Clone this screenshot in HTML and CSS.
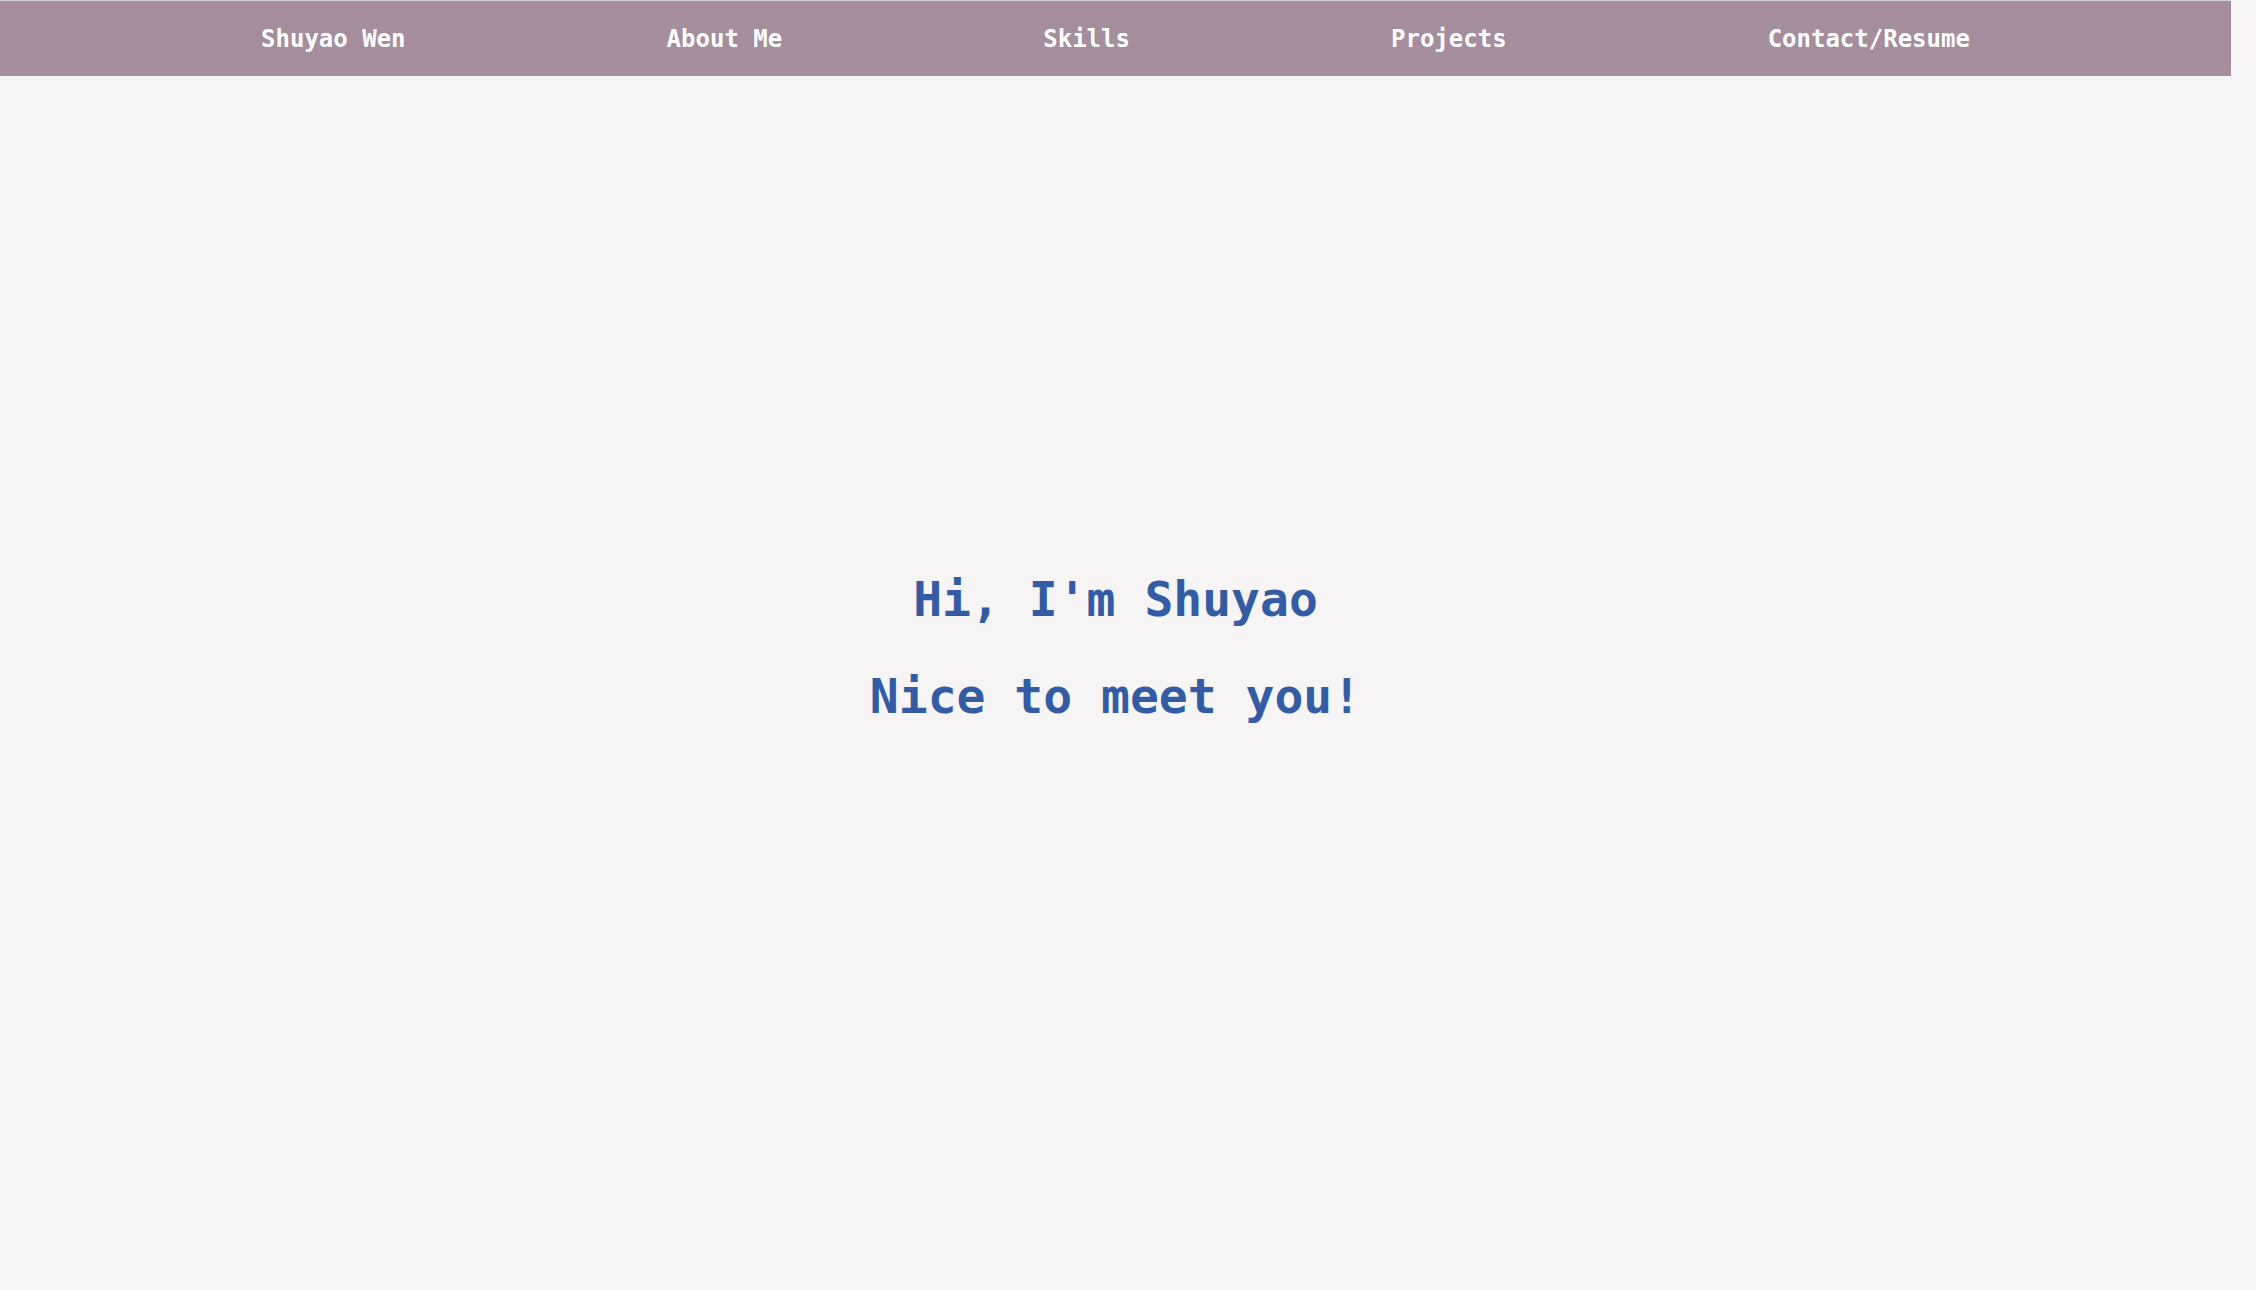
FILE: index.html
```html
<!DOCTYPE html>
<html lang="en">
<head>
<meta charset="utf-8">
<title>Shuyao Wen</title>
<link rel="stylesheet" href="styles.css">
</head>
<body>
<nav class="topnav">
  <a class="nav-link" href="#home">Shuyao Wen</a>
  <a class="nav-link" href="#about">About Me</a>
  <a class="nav-link" href="#skills">Skills</a>
  <a class="nav-link" href="#projects">Projects</a>
  <a class="nav-link" href="#contact">Contact/Resume</a>
</nav>
<main class="page">
  <section class="hero" id="home">
    <h1 class="hero-line">Hi, I'm Shuyao</h1>
    <h1 class="hero-line">Nice to meet you!</h1>
  </section>
  <section class="section" id="about"></section>
  <section class="section" id="skills"></section>
  <section class="section" id="projects"></section>
  <section class="section" id="contact"></section>
</main>
</body>
</html>
```

FILE: styles.css
```css
html, body {
  margin: 0;
  padding: 0;
}
html {
  overflow-y: scroll;
}
body {
  background: #f6f4f5;
  font-family: "DejaVu Sans Mono", "Liberation Mono", monospace;
}
.topnav {
  position: fixed;
  top: 0;
  left: 0;
  right: 25px;
  height: 75px;
  border-top: 1px solid #cfcfd2;
  background: #a48d9c;
  display: flex;
  align-items: center;
  justify-content: space-evenly;
  z-index: 10;
}
.nav-link {
  color: #ffffff;
  text-decoration: none;
  font-weight: bold;
  font-size: 24px;
  line-height: 28px;
}
.page {
  margin-right: 25px;
}
.hero {
  height: 100vh;
  box-sizing: border-box;
  padding-top: 5px;
  display: flex;
  flex-direction: column;
  align-items: center;
  justify-content: center;
  gap: 41px;
}
.hero-line {
  margin: 0;
  color: #345ca4;
  font-size: 48px;
  line-height: 56px;
  font-weight: bold;
}
.section {
  height: 1050px;
}
```
